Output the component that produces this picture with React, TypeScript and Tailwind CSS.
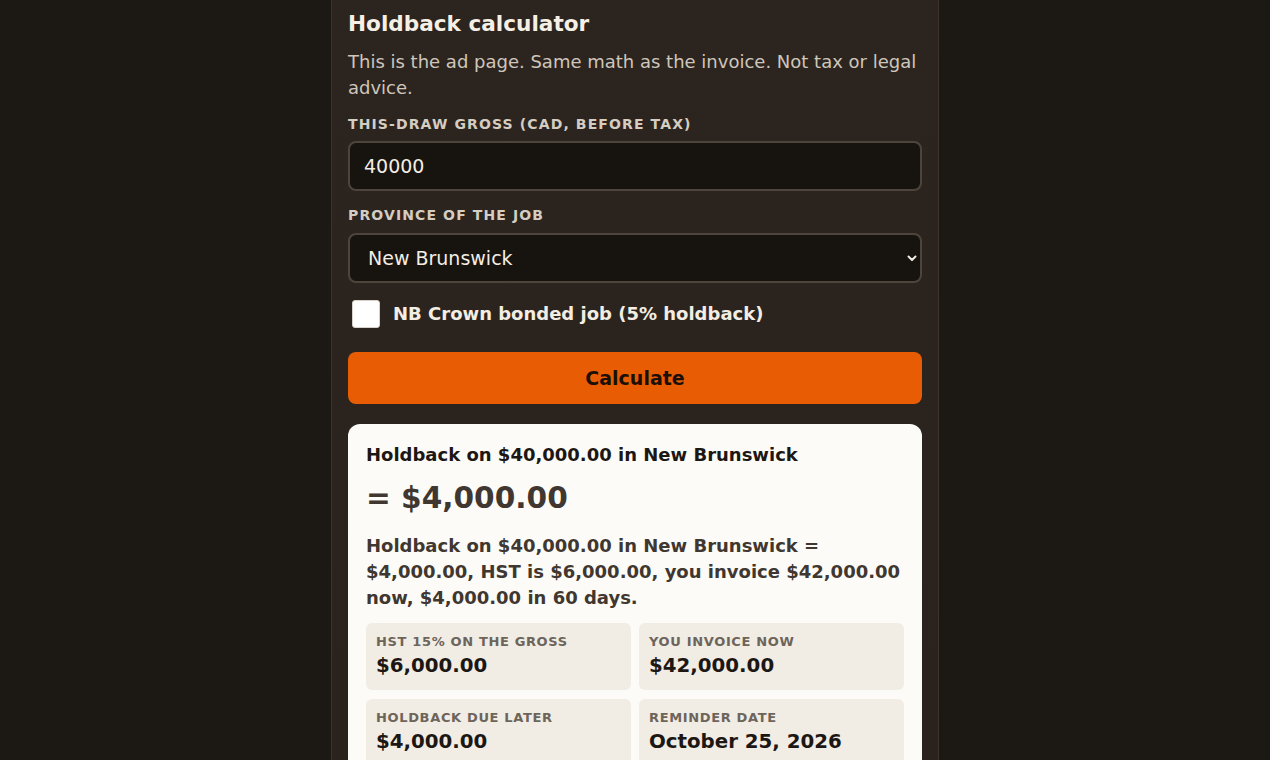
import React from "react";

const stats = [
  { label: "HST 15% on the gross", value: "$6,000.00" },
  { label: "You invoice now", value: "$42,000.00" },
  { label: "Holdback due later", value: "$4,000.00" },
  { label: "Reminder date", value: "October 25, 2026" },
];

export default function App() {
  return (
    <div
      className="min-h-screen w-full bg-[#1c1814] flex justify-center overflow-hidden"
      style={{ fontFamily: '"DejaVu Sans", Verdana, sans-serif' }}
    >
      <div className="w-[608px] border-x border-[#3b332c] bg-gradient-to-b from-[#2c251f] to-[#29221d] px-4 pt-[10px] pb-10">
        <h1 className="text-[21.6px] leading-[27px] font-bold text-[#f5efe6]">Holdback calculator</h1>
        <p className="mt-[12px] text-[18px] leading-[26px] text-[#cfc6bb]">
          This is the ad page. Same math as the invoice. Not tax or legal advice.
        </p>

        <label className="block mt-[14px] mb-[8px] text-[14px] leading-[18px] font-bold tracking-[0.08em] uppercase text-[#d6cdc2]">
          This-draw gross (CAD, before tax)
        </label>
        <div className="h-[50px] rounded-[8px] border-2 border-[#4d453c] bg-[#17130f] flex items-center pl-[14px] text-[19px] text-[#f3ede4]">
          40000
        </div>

        <label className="block mt-[15px] mb-[9px] text-[14px] leading-[18px] font-bold tracking-[0.08em] uppercase text-[#d6cdc2]">
          Province of the job
        </label>
        <div className="h-[50px] rounded-[8px] border-2 border-[#4d453c] bg-[#17130f] flex items-center pl-[18px] pr-[3px] text-[19px] text-[#f3ede4]">
          <span className="flex-1">New Brunswick</span>
          <svg width="10" height="7" viewBox="0 0 10 7">
            <path d="M1.5 1.5 L5 5 L8.5 1.5" fill="none" stroke="#f3ede4" strokeWidth="2" strokeLinecap="round" strokeLinejoin="round" />
          </svg>
        </div>

        <div className="mt-[17px] flex items-center gap-[13px] pl-[4px]">
          <span className="w-[28px] h-[28px] rounded-[3px] bg-white border border-[#d8d2ca]" />
          <span className="text-[18px] leading-[26px] font-bold text-[#f3ede4]">NB Crown bonded job (5% holdback)</span>
        </div>

        <button className="mt-[24px] w-full h-[52px] rounded-[8px] bg-[#e85d04] text-[19px] font-bold text-[#1b0f06]">
          Calculate
        </button>

        <div className="mt-[20px] rounded-[12px] bg-[#fdfbf7] px-[18px] pt-[19px] pb-[18px]">
          <div className="text-[18px] leading-[24px] font-bold text-[#1c1713]">Holdback on $40,000.00 in New Brunswick</div>
          <div className="mt-[13px] text-[29.6px] leading-[36px] font-bold text-[#3f3730]">= $4,000.00</div>
          <p className="mt-[17px] text-[18px] leading-[26px] font-bold text-[#3f3730]">
            Holdback on $40,000.00 in New Brunswick = $4,000.00, HST is $6,000.00, you invoice $42,000.00 now, $4,000.00 in 60 days.
          </p>
          <div className="mt-[12px] grid grid-cols-2 gap-x-[8px] gap-y-[9px]">
            {stats.map((s) => (
              <div key={s.label} className="h-[67px] rounded-[6px] bg-[#f1ece4] px-[10px] pt-[10px]">
                <div className="text-[13px] leading-[18px] font-bold tracking-[0.05em] uppercase text-[#6d645a]">{s.label}</div>
                <div className="mt-[3px] text-[19.8px] leading-[24px] font-bold text-[#1c1713]">{s.value}</div>
              </div>
            ))}
          </div>
        </div>
      </div>
    </div>
  );
}
